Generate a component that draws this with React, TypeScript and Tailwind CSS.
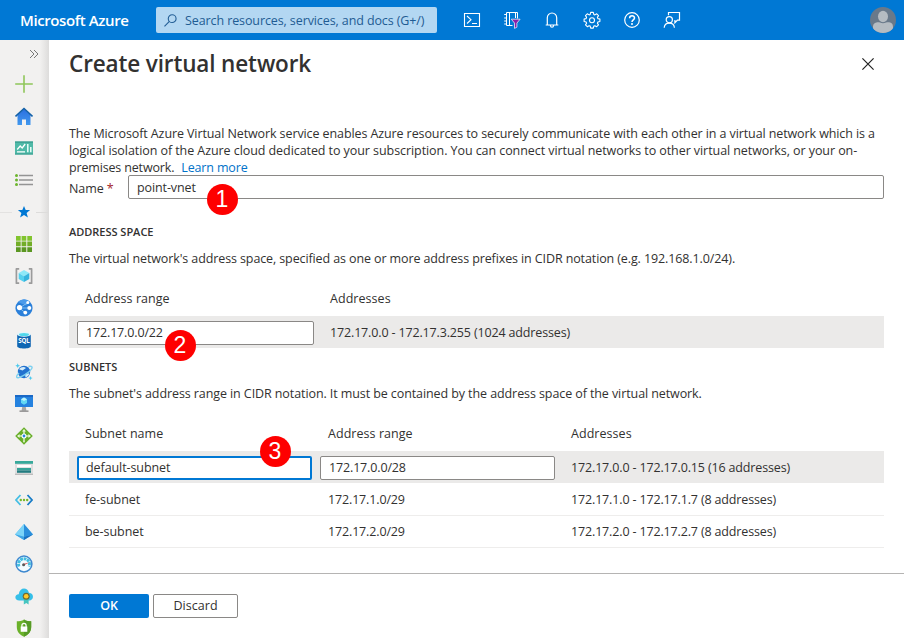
import React from "react";

const svgBox = "block h-[18px] w-[18px] shrink-0";

function Svg({ children }: { children: React.ReactNode }) {
  return (
    <svg viewBox="0 0 18 18" className={svgBox} fill="none">
      {children}
    </svg>
  );
}

const topIcons = [
  <Svg key="shell">
    <path d="M1.500 2.500h15v13h-15zM4 5l4 3.700L4 12.500M9 12.500h5" stroke="#fff" strokeWidth="1.100" />
  </Svg>,
  <Svg key="filter">
    <path d="M3.500 1.500h11v6M3.500 1.500v13h6M6.500 1.500v13M12.500 1.500v5.500M1.200 3.500h2.300M1.200 7h2.300M1.200 10h2.300M1.200 13h2.300" stroke="#fff" strokeWidth="1" />
    <path d="M8.300 8.200h8.800l-3.200 3.900v4.100l-2.400 1.200v-5.300z" fill="#8a1fa8" stroke="#fff" strokeWidth=".7" />
  </Svg>,
  <Svg key="bell">
    <path d="M4.300 13.500V6.700a4.700 4.700 0 0 1 9.400 0v6.800M2.700 14h12.600M7.400 14.500c.2 2.300 3 2.300 3.200 0" stroke="#fff" strokeWidth="1.200" />
  </Svg>,
  <Svg key="gear">
    <path
      d="M7.700 1.400h2.600l.5 2 1.100.5 1.800-1.100 1.800 1.800-1.100 1.800.5 1.200 2 .4v2.500l-2 .5-.5 1.200 1.100 1.700-1.800 1.800-1.800-1-1.100.4-.5 2H7.700l-.5-2-1.100-.4-1.800 1-1.800-1.800 1.100-1.700-.5-1.200-2-.5V8l2-.4.5-1.200-1.100-1.800 1.800-1.800 1.800 1.100 1.100-.5z"
      stroke="#fff"
      strokeWidth="1.100"
      strokeLinejoin="round"
    />
    <circle cx="9" cy="9.200" r="2.500" stroke="#fff" strokeWidth="1.100" />
  </Svg>,
  <Svg key="help">
    <circle cx="9" cy="9" r="7.300" stroke="#fff" strokeWidth="1.200" />
    <path d="M6.600 7.200c0-3.300 5-3.200 4.900-.2C11.500 8.800 9 9 9 11" stroke="#fff" strokeWidth="1.500" />
    <circle cx="9" cy="13" r="1" fill="#fff" />
  </Svg>,
  <Svg key="feedback">
    <circle cx="6.300" cy="8.700" r="3.100" stroke="#fff" strokeWidth="1.200" />
    <path d="M1.200 16.800c.4-6.300 9.800-6.300 10.200 0M5.500 4.200V1.500h11v7.600h-2l-2.600 2.600V9" stroke="#fff" strokeWidth="1.200" />
  </Svg>,
];

const sideIcons = [
  <Svg key="plus">
    <path d="M9 .2v17.600M.2 9h17.600" stroke="#8fc65a" strokeWidth="1.600" />
  </Svg>,
  <Svg key="home">
    <defs>
      <linearGradient id="home" x1="0" y1="0" x2="0" y2="1">
        <stop stopColor="#2a6fe0" />
        <stop offset="1" stopColor="#4299ee" />
      </linearGradient>
    </defs>
    <path d="M2.500 8L9 2l6.500 6v10H11v-5.500H7V18H2.500z" fill="url(#home)" />
    <path d="M.5 9.500L9 1.500l8.500 8" stroke="#1160a8" strokeWidth="1.600" />
  </Svg>,
  <Svg key="dashboard">
    <path d="M0 2.500h18v13H0z" fill="#4fb9a7" />
    <path d="M0 2.500h18v1.200H0zM0 14.500h18v1H0z" fill="#3a9c90" />
    <path d="M2.200 10.500l3-3.500 2 2 3-4M2 12.800h8" stroke="#fff" strokeWidth="1.300" />
    <path d="M12.800 5v8.200M15.800 8v5.200" stroke="#e9fffa" strokeWidth="1.500" />
  </Svg>,
  <Svg key="list">
    <path d="M4 4.500h14M4 9h14M4 13.500h14" stroke="#949494" strokeWidth="1.300" />
    <g fill="#6cb52d">
      <circle cx="1.500" cy="4.500" r="1.500" />
      <circle cx="1.500" cy="9" r="1.500" />
      <circle cx="1.500" cy="13.500" r="1.500" />
    </g>
  </Svg>,
  <Svg key="star">
    <path d="M9 2.900l1.700 4.200h4.400l-3.500 2.800 1.300 4.500L9 11.900l-3.900 2.500 1.300-4.500-3.500-2.800h4.400z" fill="#0078d4" />
  </Svg>,
  <Svg key="grid">
    <path d="M1 1h4.700v4.700H1zM6.600 1h4.700v4.700H6.600zM12.300 1H17v4.700h-4.700z" fill="#82c42e" />
    <path d="M1 6.600h4.700v4.700H1zM6.600 6.600h4.700v4.700H6.600zM12.300 6.600H17v4.700h-4.700z" fill="#72ad27" />
    <path d="M1 12.300h4.700V17H1zM6.600 12.300h4.700V17H6.600zM12.300 12.300H17V17h-4.700z" fill="#5b9722" />
  </Svg>,
  <Svg key="group">
    <path d="M4.200 1.800H1.400v14.400h2.800M13.800 1.800h2.800v14.400h-2.800" stroke="#9b9b9b" strokeWidth="1.700" strokeLinejoin="round" />
    <path d="M9 3l5.300 3L9 9.200 3.700 6z" fill="#8ce9f8" />
    <path d="M3.700 6L9 9.200V15l-5.300-3z" fill="#55d1ee" />
    <path d="M14.300 6L9 9.200V15l5.300-3z" fill="#35b4dd" />
  </Svg>,
  <Svg key="globe">
    <circle cx="9" cy="9" r="8.600" fill="#2b80da" />
    <path d="M3 2.900C7-1 12-.5 15 2.700L11 6.500z" fill="#4b9bea" />
    <path d="M4.500 9L13 3.500M4.500 9l10 0M4.500 9l6 5" stroke="#7fbdf0" strokeWidth="1" />
    <g fill="#fff">
      <circle cx="4.500" cy="8.600" r="2.600" />
      <circle cx="12.800" cy="3.600" r="1.500" />
      <circle cx="14.300" cy="9" r="2" />
      <circle cx="10.300" cy="13.600" r="1.900" />
    </g>
  </Svg>,
  <Svg key="sql">
    <path d="M2.200 3.200v12c0 3 13.600 3 13.600 0v-12z" fill="#0f66b3" />
    <ellipse cx="9" cy="3.200" rx="6.800" ry="2.500" fill="#e4f5fb" />
    <ellipse cx="9" cy="3.600" rx="5" ry="1.500" fill="#50d8ec" />
    <text x="9" y="12.300" fill="#fff" fontSize="6.200" fontWeight="700" textAnchor="middle" fontFamily="Open Sans, sans-serif">
      SQL
    </text>
  </Svg>,
  <Svg key="cosmos">
    <circle cx="9" cy="9" r="6.200" fill="#2272cf" />
    <path d="M4 6.200c2-2.500 5-3 7-1.200L7.500 7.500zM10 11l4.200-.8c0 2-1.500 3.600-3.700 4.200z" fill="#d4ecfa" />
    <path d="M13.500 3.500c7-1.500 2.500 4.700-3.500 8.200S.6 16 2 12.400c.3-.8 1.300-1.700 2.100-2.400" stroke="#7dd0f0" strokeWidth="1.400" />
    <path d="M2.700.3l.7 1.700 1.700.7-1.700.7-.7 1.700L2 3.400.3 2.700 2 2zM15.500 13l.6 1.500 1.500.6-1.500.6-.6 1.600-.6-1.600-1.500-.6 1.500-.6z" fill="#4cc9ee" />
  </Svg>,
  <Svg key="vm">
    <path d="M0 0h18v12H0z" fill="#2582df" />
    <path d="M0 0h18v2H0z" fill="#1a68c5" />
    <path d="M7.200 12h3.600l.6 3.800H6.600z" fill="#a5a5a5" />
    <path d="M4.500 15.500h9v1.300h-9z" fill="#858585" />
    <path d="M9 2.500l3 1.800v3.700L9 9.800 6 8V4.300z" fill="#62d7f3" />
    <path d="M9 2.500l3 1.800-3 1.800-3-1.800z" fill="#bdf2fc" />
  </Svg>,
  <Svg key="balancer">
    <path d="M9 .2L17.800 9 9 17.800.2 9z" fill="#67ae27" />
    <path d="M9 9V4M9 9H4M9 9h5M9 9v5" stroke="#fff" strokeWidth="1.100" />
    <path d="M9 2l2 2.600H7zM2 9l2.600-2v4zM16 9l-2.600-2v4zM7.800 13.800h2.400L9 16z" fill="#e9f7d7" />
    <circle cx="9" cy="9" r="2.500" fill="#fff" />
    <circle cx="9" cy="9" r="1.400" fill="#2784d8" />
  </Svg>,
  <Svg key="storage">
    <path d="M0 2h18v13.500H0z" fill="#dedede" />
    <path d="M0 2h18v2.800H0z" fill="#38a99b" />
    <path d="M2 6h14v2.200H2z" fill="#fff" />
    <path d="M2 9h14v2.400H2z" fill="#36a398" />
    <path d="M2 11.400h14v2.400H2z" fill="#237c80" />
    <path d="M0 14.800h18v.9H0z" fill="#a9a9a9" />
  </Svg>,
  <Svg key="vnet">
    <path d="M5.500 4L1 9l4.500 5" stroke="#45bee4" strokeWidth="1.800" />
    <path d="M12.500 4L17 9l-4.500 5" stroke="#187cc7" strokeWidth="1.800" />
    <g fill="#76b82a">
      <circle cx="5.800" cy="9" r="1.200" />
      <circle cx="9" cy="9" r="1.200" />
      <circle cx="12.200" cy="9" r="1.200" />
    </g>
  </Svg>,
  <Svg key="directory">
    <path d="M9 1l9 10.600L9 17 0 11.600z" fill="#55bdf0" />
    <path d="M9 1l9 10.600L9 13.800z" fill="#2b8fdc" />
    <path d="M9 1v12.800L.3 11.300z" fill="#7bd3f7" />
    <path d="M9 13.800V17l9-5.400z" fill="#1a6fc0" />
    <path d="M9 13.800V17l-9-5.400z" fill="#3fa3e3" />
  </Svg>,
  <Svg key="monitor">
    <circle cx="9" cy="9" r="7.900" fill="#f4fbff" stroke="#3d88cf" strokeWidth="1.500" />
    <path d="M4 11.500a5.500 5.500 0 1 1 10 0" stroke="#45bddf" strokeWidth="3" strokeDasharray="2.800 .7" />
    <path d="M8.500 9l6.200-1.800-5.800 3z" fill="#d83a3f" />
    <circle cx="8.600" cy="9.700" r="1.500" fill="#575757" />
  </Svg>,
  <Svg key="advisor">
    <path d="M4.300 13.500C-.8 13.500-.9 7.500 3.700 7.200 4.500.2 12.500-.2 13.900 5.800c5.600.4 5.200 7.700.2 7.700z" fill="#36bfe8" />
    <path d="M8.800 11.500v6l2.500-1.500 2.300 1.500v-6z" fill="#46c5c0" />
    <circle cx="11.200" cy="9.200" r="3.500" fill="#6d6a34" />
    <circle cx="11.200" cy="9.200" r="2.300" fill="#ffc928" />
  </Svg>,
  <Svg key="security">
    <path d="M9 .5C11 2 14 2.300 16.200 2.300V8c0 5-3.500 8.300-7.200 9.700C5.300 16.300 1.800 13 1.800 8V2.300C4 2.300 7 2 9 .5z" fill="#6bb12a" />
    <path d="M9 .5C11 2 14 2.300 16.200 2.300V8c0 5-3.500 8.300-7.200 9.700z" fill="#579b26" />
    <path d="M5.700 7.500h6.600v5.300H5.700z" fill="#fff" />
    <path d="M6.900 8V6.500a2.100 2.100 0 0 1 4.200 0V8" stroke="#fff" strokeWidth="1.200" />
  </Svg>,
];

function Badge({ n, place }: { n: number; place: string }) {
  return (
    <div
      className={`absolute ${place} flex h-[31px] w-[31px] items-center justify-center rounded-full bg-[#fe0000] font-['Liberation_Sans',sans-serif] text-[23px] tracking-normal text-white`}
    >
      {n}
    </div>
  );
}

const heading = "text-[11px] font-semibold leading-[16px] tracking-[-0.02px] text-[#323130]";
const field = "flex h-6 items-center rounded-[2px] border border-[#8a8886] bg-white pl-2";
const numeric = "tracking-[-0.15px]";

export default function App() {
  return (
    <div className="flex h-[638px] w-[904px] flex-col overflow-hidden bg-white font-['Open_Sans','Noto_Sans',sans-serif] text-[12.5px] tracking-[-0.1px] text-[#323130]">
      <header className="flex h-10 shrink-0 items-center bg-[#0078d4] text-white">
        <div className="w-[136px] pl-5 text-[15px] font-semibold tracking-[-0.4px] whitespace-nowrap">Microsoft Azure</div>
        <div className="ml-5 flex h-[26px] w-[281px] items-center rounded-[2px] bg-[#b3d7f2] pl-2 text-[#1f5c93]">
          <svg viewBox="0 0 14 14" className="h-[13px] w-[13px]" fill="none" stroke="#245f96" strokeWidth="1.200">
            <circle cx="8.800" cy="5" r="4.200" />
            <path d="M5.800 8L.5 13.300" />
          </svg>
          <span className="ml-2 pt-[2px] whitespace-nowrap">Search resources, services, and docs (G+/)</span>
        </div>
        <div className="ml-[26px] flex gap-[22px]">{topIcons}</div>
        <svg viewBox="0 0 26 26" className="mr-2 ml-auto h-[26px] w-[26px]">
          <defs>
            <clipPath id="avatar">
              <circle cx="13" cy="13" r="13" />
            </clipPath>
          </defs>
          <g clipPath="url(#avatar)">
            <path d="M0 0h26v26H0z" fill="#69798a" />
            <ellipse cx="13" cy="9.500" rx="5" ry="5.700" fill="#b5bcc2" />
            <path d="M3 26v-6c0-5 5-5 7-4.500 2 1 4 1 6 0 3-.5 7-.5 7 4.500v6z" fill="#b5bcc2" />
          </g>
        </svg>
      </header>

      <div className="flex min-h-0 flex-1">
        <nav className="flex w-[49px] shrink-0 flex-col bg-[linear-gradient(to_right,#f2f1f0_40px,#dddcdb_49px)]">
          <div className="flex h-7 shrink-0 items-center pl-[29px]">
            <svg viewBox="0 0 10 10" className="h-[10px] w-[10px]" fill="none" stroke="#777" strokeWidth="1">
              <path d="M1 1l4 4-4 4M5 1l4 4-4 4" />
            </svg>
          </div>
          {sideIcons.map((icon, i) => (
            <div key={i} className="flex h-8 w-12 shrink-0 items-center justify-center">
              {i === 4 && <span className="mr-auto h-px w-[12px] bg-[#e3e2e1]" />}
              {icon}
              {i === 4 && <span className="ml-auto h-px w-[12px] bg-[#dddcdb]" />}
            </div>
          ))}
        </nav>

        <main className="relative flex flex-1 flex-col">
          <div className="flex h-12 items-center justify-between pr-[30px] pl-5">
            <h1 className="text-[22.5px] font-semibold tracking-[-0.13px] whitespace-nowrap">Create virtual network</h1>
            <svg viewBox="0 0 12 12" className="h-3 w-3" stroke="#222" strokeWidth="1.200">
              <path d="M.4.4l11.200 11.200M11.600.4L.4 11.600" />
            </svg>
          </div>

          <div className="flex h-[486px] shrink-0 flex-col border-b border-[#b5b4b3] pr-5 pl-5">
            <p className="mt-[36px] h-[51px] pt-px leading-[17px] whitespace-nowrap">
              The Microsoft Azure Virtual Network service enables Azure resources to securely communicate with each other in a virtual network which is a
              <br />
              <span className="tracking-[-0.07px]">
                logical isolation of the Azure cloud dedicated to your subscription. You can connect virtual networks to other virtual networks, or your on-
              </span>
              <br />
              <span className="tracking-[-0.16px]">
                premises network. <span className="ml-1 text-[#0072c9]">Learn more</span>
              </span>
            </p>
            <div className="flex h-6">
              <label className="w-[59px] pt-[5px]">
                Name <span className="text-[#a4262c]">*</span>
              </label>
              <div className={`${field} flex-1 pt-[2px]`}>point-vnet</div>
            </div>

            <h2 className={`${heading} mt-[25px]`}>ADDRESS SPACE</h2>
            <p className="mt-[9px] h-5 leading-5 tracking-[-0.11px] whitespace-nowrap">
              The virtual network's address space, specified as one or more address prefixes in CIDR notation (e.g. 192.168.1.0/24).
            </p>
            <div className="mt-[11px] grid h-9 grid-cols-[245px_1fr] items-center pt-[2px] pl-4 tracking-[0.05px]">
              <span>Address range</span>
              <span>Addresses</span>
            </div>
            <div className={`grid h-8 grid-cols-[253px_1fr] items-center bg-[#ebeae9] pt-[2px] pl-2 ${numeric}`}>
              <div className={`${field} w-[237px]`}>172.17.0.0/22</div>
              <span>172.17.0.0 - 172.17.3.255 (1024 addresses)</span>
            </div>

            <h2 className={`${heading} mt-[11px]`}>SUBNETS</h2>
            <p className="mt-[9px] h-5 leading-5 tracking-[-0.09px] whitespace-nowrap">
              The subnet's address range in CIDR notation. It must be contained by the address space of the virtual network.
            </p>
            <div className="mt-[11px] grid h-9 grid-cols-[243px_243px_1fr] items-center pt-[2px] pl-4 tracking-[0.05px]">
              <span>Subnet name</span>
              <span>Address range</span>
              <span>Addresses</span>
            </div>
            <div className={`grid h-8 grid-cols-[243px_251px_1fr] items-center bg-[#ebeae9] pt-[2px] pl-2 ${numeric}`}>
              <div className="flex h-6 w-[235px] items-center rounded-[2px] border-2 border-[#0078d4] bg-white pl-[7px] tracking-[-0.08px]">
                default-subnet
              </div>
              <div className={`${field} w-[235px]`}>172.17.0.0/28</div>
              <span>172.17.0.0 - 172.17.0.15 (16 addresses)</span>
            </div>
            <div className={`grid h-[33px] grid-cols-[243px_243px_1fr] items-center border-b border-[#eeedec] pt-[2px] pl-4 ${numeric}`}>
              <span className="tracking-[-0.05px]">fe-subnet</span>
              <span>172.17.1.0/29</span>
              <span>172.17.1.0 - 172.17.1.7 (8 addresses)</span>
            </div>
            <div className={`grid h-8 grid-cols-[243px_243px_1fr] items-center border-b border-[#eeedec] pt-[2px] pl-4 ${numeric}`}>
              <span className="tracking-[-0.05px]">be-subnet</span>
              <span>172.17.2.0/29</span>
              <span>172.17.2.0 - 172.17.2.7 (8 addresses)</span>
            </div>
          </div>

          <footer className="flex gap-1 pt-5 pl-5">
            <button className="h-6 w-20 rounded-[2px] bg-[#0078d4] font-semibold text-white">OK</button>
            <button className="h-6 w-[85px] rounded-[2px] border border-[#8a8886] bg-white font-medium tracking-[0.05px]">Discard</button>
          </footer>

          <Badge n={1} place="left-[157.5px] top-[143.5px]" />
          <Badge n={2} place="left-[115.5px] top-[289.5px]" />
          <Badge n={3} place="left-[210.5px] top-[395.5px]" />
        </main>
      </div>
    </div>
  );
}
